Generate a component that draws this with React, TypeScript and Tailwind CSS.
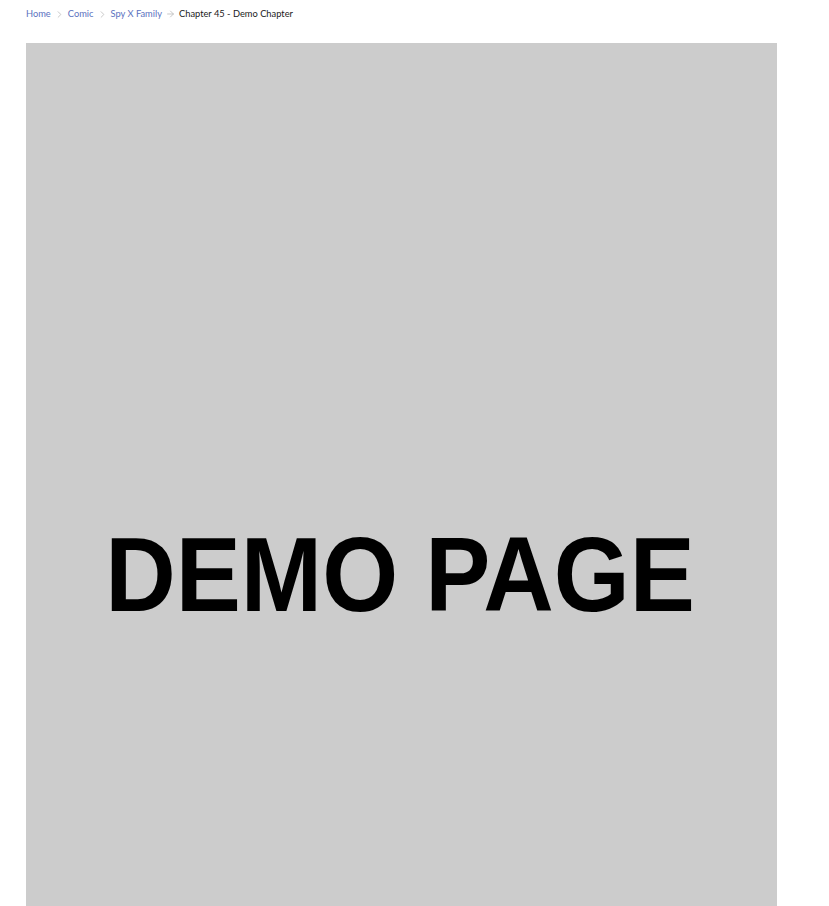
import { ChevronRight, ArrowRight } from "lucide-react";

const crumbs = [
  { label: "Home", href: "#" },
  { label: "Comic", href: "#" },
  { label: "Spy X Family", href: "#" },
];

export default function App() {
  return (
    <div className="min-h-screen bg-white px-[26px] pt-[7px] font-['Lato',sans-serif]">
      <nav className="flex h-[14px] items-center text-[9.3px] leading-none">
        {crumbs.map((c, i) => (
          <span key={c.label} className="flex items-center">
            <a href={c.href} className="text-[#5b72c0]">
              {c.label}
            </a>
            {i < crumbs.length - 1 ? (
              <ChevronRight className="mx-[2px] h-[11px] w-[13px] text-[#c4c4c4]" strokeWidth={2} />
            ) : (
              <ArrowRight className="mx-[2px] h-[10px] w-[13px] text-[#bdbdbd]" strokeWidth={2} />
            )}
          </span>
        ))}
        <span className="text-[#1a1a1a]">Chapter 45 - Demo Chapter</span>
      </nav>

      <div className="mt-[22px] flex h-[900px] w-[751px] items-center justify-center bg-[#cccccc] pt-[162px] pr-[3px]">
        <span className="inline-block scale-x-[0.93] font-['Liberation_Sans',Arial,sans-serif] text-[105px] font-bold leading-none text-black">
          DEMO PAGE
        </span>
      </div>
    </div>
  );
}
